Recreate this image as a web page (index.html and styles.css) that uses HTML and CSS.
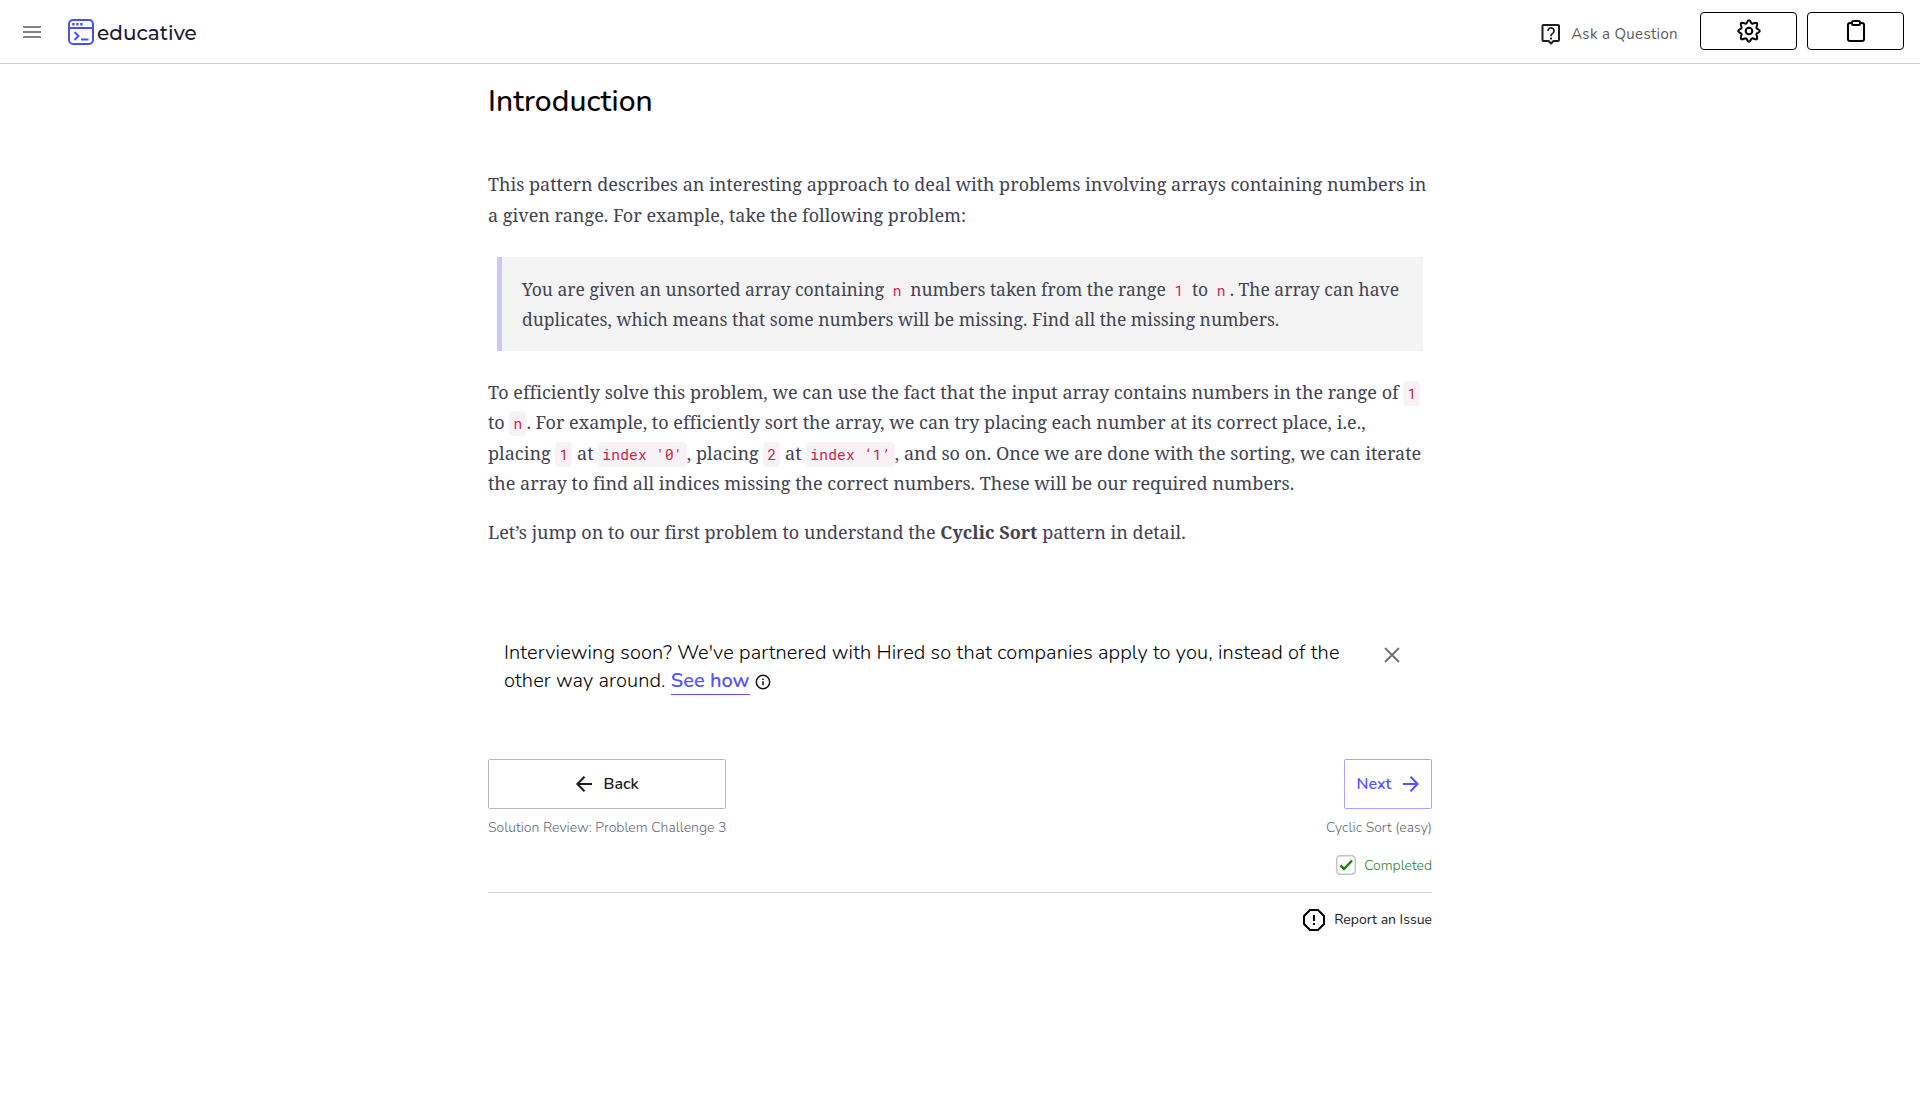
FILE: index.html
```html
<!DOCTYPE html>
<html lang="en">
<head>
<meta charset="utf-8">
<title>Introduction - educative</title>
<link rel="stylesheet" href="styles.css">
</head>
<body>
<header class="topbar">
  <button class="menu" aria-label="Menu"><svg width="18" height="12" viewBox="0 0 18 12"><path d="M0 1h18M0 6h18M0 11h18" stroke="#808080" stroke-width="2"/></svg></button>
  <a class="brand">
    <svg width="26" height="26" viewBox="0 0 26 26" fill="none" stroke="#4951f5" stroke-width="2"><rect x="1" y="1" width="24" height="24" rx="4"/><path d="M1 9h24"/><path d="M4.2 5.3h2.4M8.2 5.3h2.4M12.2 5.3h2.4" stroke-width="2.4"/><path d="M6.5 13l4 4-4 4M13 20.5h7.5"/></svg>
    <span class="brand-name">educative</span>
  </a>
  <div class="actions">
    <a class="ask">
      <svg width="20" height="22" viewBox="0 0 20 22" fill="none" stroke="#1f1f1f" stroke-width="2" stroke-linejoin="round"><path d="M2.5 2h14.500q1 0 1 1v14q0 1-1 1h-4.500L10 20.500 7.500 18h-5q-1 0-1-1V3q0-1 1-1z"/><path d="M7 8a3 3 0 1 1 4.600 2.500Q10 11.500 10 13.200" stroke-width="1.700"/><path d="M10 14.600v1.800" stroke-width="1.900"/></svg>
      <span>Ask a Question</span>
    </a>
    <button class="tool" aria-label="Settings"><svg width="24" height="24" viewBox="0 0 24 24" fill="none" stroke="#000" stroke-width="2" stroke-linejoin="round"><path d="M10.300 2.800Q12 -.4 13.700 2.800C14.100 4.600 15.300 5.100 16.800 4.200 20 3 21 4 19.800 7.200 18.900 8.700 19.400 9.900 21.200 10.300Q24.400 12 21.200 13.700C19.400 14.100 18.900 15.300 19.800 16.800 21 20 20 21 16.800 19.800 15.300 18.900 14.100 19.400 13.700 21.200Q12 24.400 10.300 21.200C9.900 19.400 8.700 18.900 7.200 19.800 4 21 3 20 4.200 16.800 5.100 15.300 4.600 14.100 2.800 13.700Q-.4 12 2.800 10.300C4.600 9.900 5.100 8.700 4.200 7.200 3 4 4 3 7.200 4.200 8.700 5.100 9.900 4.600 10.300 2.800z"/><circle cx="12" cy="12" r="3.300"/></svg></button>
    <button class="tool" aria-label="Notes"><svg width="18" height="22" viewBox="0 0 18 22" fill="none" stroke="#000" stroke-width="2" stroke-linejoin="round"><rect x="1" y="3" width="16" height="18" rx="2"/><rect x="5" y="1" width="8" height="4" rx="1.500" fill="#fff"/></svg></button>
  </div>
</header>
<main class="lesson">
  <h1>Introduction</h1>
  <article class="prose">
    <p class="lead">This pattern describes an interesting approach to deal with problems involving arrays containing numbers in a given range. For example, take the following problem:</p>
    <blockquote>You are given an unsorted array containing <code>n</code> numbers taken from the range <code>1</code> to <code>n</code>. The array can have duplicates, which means that some numbers will be missing. Find all the missing numbers.</blockquote>
    <p>To efficiently solve this problem, we can use the fact that the input array contains numbers in the range of <code>1</code> to <code>n</code>. For example, to efficiently sort the array, we can try placing each number at its correct place, i.e., placing <code>1</code> at <code>index '0'</code>, placing <code>2</code> at <code>index ‘1’</code>, and so on. Once we are done with the sorting, we can iterate the array to find all indices missing the correct numbers. These will be our required numbers.</p>
    <p>Let’s jump on to our first problem to understand the <strong>Cyclic Sort</strong> pattern in detail.</p>
  </article>
  <aside class="promo">
    <p>Interviewing soon? We've partnered with Hired so that companies apply to you, instead of the other way around. <a class="promo-link">See how</a> <svg class="info" width="16" height="16" viewBox="0 0 16 16" fill="none" stroke="#111" stroke-width="1.500"><circle cx="8" cy="8" r="6.700"/><path d="M8 7.200v4M8 4.500v1.600"/></svg></p>
    <button class="close" aria-label="Close"><svg width="16" height="16" viewBox="0 0 16 16" stroke="#6f6f6f" stroke-width="1.800"><path d="M1 1l14 14M15 1L1 15"/></svg></button>
  </aside>
  <nav class="pager">
    <div class="prev">
      <button class="btn btn-back"><svg width="16" height="16" viewBox="0 0 16 16" fill="none" stroke="#1c1c1c" stroke-width="2"><path d="M16 8H1.500M8.500 .8L1.400 8l7.100 7.200"/></svg>Back</button>
      <span class="caption">Solution Review: Problem Challenge 3</span>
    </div>
    <div class="next">
      <button class="btn btn-next">Next<svg width="16" height="16" viewBox="0 0 16 16" fill="none" stroke="#5553ff" stroke-width="2"><path d="M0 8h14.500M7.500 .8L14.600 8l-7.100 7.200"/></svg></button>
      <span class="caption">Cyclic Sort (easy)</span>
      <label class="done"><svg width="20" height="20" viewBox="0 0 20 20" fill="none"><rect x=".75" y=".75" width="18.500" height="18.500" rx="3.500" stroke="#c4c4c4" stroke-width="1.500"/><path d="M4.500 10.500l3.500 3.500L16 5.500" stroke="#1e8500" stroke-width="2.500"/></svg><span>Completed</span></label>
    </div>
  </nav>
  <footer class="report">
    <a><svg width="22" height="22" viewBox="0 0 22 22" fill="none" stroke="#000" stroke-width="2"><path d="M7 1h8l6 6v8l-6 6H7l-6-6V7z"/><path d="M11 6v6M11 14v2"/></svg>Report an Issue</a>
  </footer>
</main>
</body>
</html>
```
FILE: styles.css
```css
* { box-sizing: border-box; }
body { margin: 0; background: #fff; color: #000; font-family: Nunito, "Open Sans", sans-serif; }
button { background: none; border: 0; padding: 0; font: inherit; }
svg { display: block; flex: none; }

.topbar { display: flex; align-items: center; height: 64px; padding: 0 16px 0 23px; border-bottom: 1px solid #d0d0d0; }
.menu { margin-right: 27px; }
.brand { display: flex; align-items: center; gap: 3px; }
.brand-name { padding-top: 2px; font: 500 20px/24px Montserrat, "Open Sans", sans-serif; color: #1c1b33; }
.actions { display: flex; align-items: center; gap: 10px; margin-left: auto; padding-bottom: 1px; }
.ask { display: flex; align-items: center; gap: 10px; margin-right: 12px; padding-top: 5px; font-size: 15px; line-height: 22px; letter-spacing: .35px; color: #5c5c5c; }
.tool { display: flex; align-items: center; justify-content: center; width: 97px; height: 38px; border: 1px solid #000; border-radius: 4px; }

.lesson { width: 944px; margin: 0 auto; padding-top: 18px; }
h1 { margin: 0 0 47px; font-size: 30px; font-weight: 500; line-height: 40px; letter-spacing: .08px; }
.prose { width: 940px; color: #424250; font: 18px/30.400px "Noto Serif", serif; }
.prose p { margin: 0 0 18.400px; letter-spacing: .012px; }
.prose .lead { line-height: 31px; letter-spacing: 0; }
.prose blockquote { margin: 26px 5px 25.800px 9px; padding: 17px 20px; background: #f4f4f4; border-left: 5px solid #c8c7ff; font-size: 17.500px; line-height: 30px; }
code { padding: 3px 4px; border-radius: 4px; background: #f9f2f4; color: #c7254e; font: 14.500px/1 "Roboto Mono", monospace; letter-spacing: .24px; }

.promo { display: flex; justify-content: space-between; align-items: flex-start; padding: 0 32px 0 16px; margin-top: 92px; }
.promo p { width: 850px; margin: 0; font-size: 20px; font-weight: 350; line-height: 28px; letter-spacing: .12px; }
.promo-link { border-bottom: 1px solid #5553ff; color: #5553ff; font-weight: 600; letter-spacing: 0; }
.info { display: inline-block; vertical-align: -3px; }
.close { margin-top: 8px; }

.pager { display: flex; justify-content: space-between; margin-top: 64px; }
.prev, .next { display: flex; flex-direction: column; }
.next { align-items: flex-end; }
.btn { display: flex; align-items: center; justify-content: center; gap: 12px; height: 50px; padding-bottom: 1px; border: 1px solid #b8b8b8; border-radius: 2px; font-size: 16px; font-weight: 650; color: #1c1c1c; }
.btn-next { width: 88px; border-color: #a6a5ff; color: #5553ff; }
.caption { margin-top: 9px; font-size: 14px; font-weight: 350; line-height: 20px; letter-spacing: .02px; color: #66667a; }
.done { display: flex; align-items: center; gap: 8px; margin-top: 17px; font-size: 14px; font-weight: 350; line-height: 20px; color: #2c8021; }
.done span { padding-top: 1px; margin-bottom: -1px; }
.report { display: flex; justify-content: flex-end; margin-top: 17px; padding-top: 16px; border-top: 1px solid #d0d0d0; }
.report a { display: flex; align-items: center; gap: 9px; font-size: 14px; line-height: 20px; color: #1c1c1c; }
```
